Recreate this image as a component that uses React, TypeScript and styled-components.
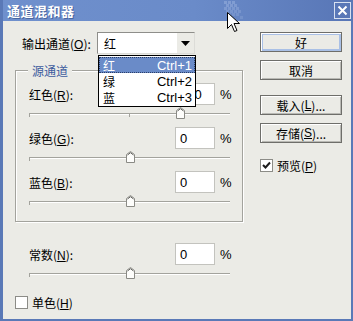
import React from "react";
import styled, { createGlobalStyle } from "styled-components";

const GlobalStyle = createGlobalStyle`
  html, body {
    margin: 0;
    padding: 0;
    background: #ebebe6;
  }
  body {
    font-family: "Liberation Sans", "Noto Sans CJK SC", sans-serif;
    font-size: 12px;
    color: #000;
  }
`;

const Window = styled.div`
  position: relative;
  width: 353px;
  height: 321px;
  box-sizing: border-box;
  background: #ebebe6;
  border-left: 3px solid #5a79b7;
  border-right: 2px solid #5a79b7;
  border-bottom: 2px solid #5a79b7;
  overflow: hidden;
`;

const TitleBar = styled.div`
  position: relative;
  height: 21px;
  margin-left: -3px;
  margin-right: -2px;
  display: flex;
  align-items: center;
  justify-content: space-between;
  padding: 0 2px 0 7px;
  background: linear-gradient(to right, #6f90cd 0%, #6a8bc9 55%, #5876b6 100%);
`;

const Title = styled.span`
  color: #fff;
  font-family: "Noto Sans CJK SC", sans-serif;
  font-weight: 700;
  font-size: 13px;
  letter-spacing: 0.5px;
  text-shadow: 1px 1px 0 #4a66a0;
`;

const CloseButton = styled.div`
  width: 15px;
  height: 15px;
  border: 1px solid #d8e1f1;
  display: flex;
  align-items: center;
  justify-content: center;
`;

const Body = styled.div`
  display: flex;
  height: 298px;
`;

const LeftCol = styled.div`
  width: 229px;
  padding-left: 12px;
  display: flex;
  flex-direction: column;
`;

const RightCol = styled.div`
  margin-left: 16px;
  padding-top: 11px;
  display: flex;
  flex-direction: column;
`;

const OutputRow = styled.div`
  position: relative;
  margin-top: 11px;
  padding-left: 7px;
  display: flex;
  align-items: center;
  height: 22px;
`;

const Label = styled.span<{ $width?: number }>`
  font-family: "Noto Sans CJK SC", sans-serif;
  font-size: 12px;
  width: ${(p) => (p.$width ? `${p.$width}px` : "auto")};
  white-space: nowrap;
  u {
    font-family: "Liberation Sans", sans-serif;
  }
`;

const Combo = styled.div`
  position: relative;
  width: 98px;
  height: 22px;
  box-sizing: border-box;
  background: #fff;
  border: 1px solid #8e8e8a;
  border-right-color: #dcdcd8;
  border-bottom-color: #dcdcd8;
  display: flex;
  align-items: center;
  justify-content: space-between;
  padding-left: 6px;
`;

const ComboArrow = styled.div`
  width: 17px;
  height: 20px;
  background: #ebebe6;
  display: flex;
  align-items: center;
  justify-content: center;
`;

const DropList = styled.div`
  position: absolute;
  left: 0;
  top: 22px;
  width: 98px;
  box-sizing: border-box;
  background: #fff;
  border: 1px solid #000;
  padding: 1px 0;
  z-index: 5;
`;

const DropItem = styled.div<{ $active?: boolean }>`
  height: 16px;
  display: flex;
  align-items: center;
  justify-content: space-between;
  padding: 0 3px 0 4px;
  background: ${(p) => (p.$active ? "#6a8bc8" : "transparent")};
  color: ${(p) => (p.$active ? "#fff" : "#000")};
  outline: ${(p) => (p.$active ? "1px dotted #2a3f6a" : "none")};
  outline-offset: -1px;
  span:first-child {
    font-family: "Noto Sans CJK SC", sans-serif;
  }
  span:last-child {
    font-family: "Liberation Sans", sans-serif;
    font-size: 13px;
  }
`;

const Group = styled.div`
  position: relative;
  margin-top: 16px;
  width: 228px;
  height: 152px;
  box-sizing: border-box;
  border: 1px solid #a3a39d;
  box-shadow: inset 1px 1px 0 #fff, 1px 1px 0 #fff;
  padding: 12px 0 0 13px;
`;

const Legend = styled.span`
  position: absolute;
  top: -8px;
  left: 12px;
  padding: 0 4px;
  background: #ebebe6;
  color: #3d5c9e;
  font-family: "Noto Sans CJK SC", sans-serif;
  font-size: 12px;
  line-height: 16px;
`;

const ParamRow = styled.div<{ $indent?: number }>`
  display: flex;
  align-items: center;
  height: 22px;
  padding-left: ${(p) => p.$indent ?? 0}px;
`;

const NumBox = styled.div`
  width: 40px;
  height: 22px;
  box-sizing: border-box;
  background: #fff;
  border: 1px solid #c3c3be;
  display: flex;
  align-items: center;
  padding-left: 4px;
  font-family: "Liberation Sans", sans-serif;
  font-size: 13px;
`;

const Percent = styled.span`
  margin-left: 5px;
  font-family: "Liberation Sans", sans-serif;
  font-size: 13px;
`;

const SliderWrap = styled.div<{ $indent?: number }>`
  position: relative;
  height: 22px;
  width: 201px;
  margin-left: ${(p) => p.$indent ?? 0}px;
`;

const Track = styled.div`
  position: absolute;
  left: 0;
  right: 0;
  top: 8px;
  height: 1px;
  background: #a3a39d;
  border-bottom: 1px solid #fff;
`;

const Tick = styled.div<{ $at: number }>`
  position: absolute;
  top: 9px;
  left: ${(p) => p.$at}px;
  width: 1px;
  height: 3px;
  background: #a3a39d;
`;

const Thumb = styled.svg`
  position: absolute;
  top: 2px;
`;

const GroupGap = styled.div`
  height: 21px;
`;

const CheckRow = styled.div<{ $top?: number }>`
  display: flex;
  align-items: center;
  gap: 4px;
  margin-top: ${(p) => p.$top ?? 0}px;
`;

const CheckBox = styled.div`
  width: 13px;
  height: 13px;
  box-sizing: border-box;
  background: #fff;
  border: 1px solid #8c8c87;
  display: flex;
  align-items: center;
  justify-content: center;
`;

const Button = styled.div<{ $default?: boolean; $gap?: number }>`
  width: 82px;
  height: 20px;
  box-sizing: border-box;
  margin-top: ${(p) => p.$gap ?? 0}px;
  border: 1px solid #6e6e6a;
  background: #ebebe6;
  box-shadow: ${(p) =>
    p.$default
      ? "inset 1px 1px 0 #fff, inset 0 0 0 2px #a9c0e6"
      : "inset 1px 1px 0 #fff, inset -1px -1px 0 #b9b9b4"};
  display: flex;
  align-items: center;
  justify-content: center;
  font-family: "Noto Sans CJK SC", sans-serif;
  font-size: 12px;
  u {
    font-family: "Liberation Sans", sans-serif;
  }
`;

const Cursor = styled.svg`
  position: absolute;
  left: 224px;
  top: 12px;
  z-index: 10;
`;

const Checker = styled.svg`
  position: absolute;
  left: 222px;
  top: 0;
`;

const SliderThumb = ({ pct }: { pct: number }) => (
  <Thumb width="9" height="12" viewBox="0 0 9 12" style={{ left: `${Math.round(pct * 201) - 4}px` }}>
    <path d="M0.5 3.5 L4.5 0.5 L8.5 3.5 L8.5 11.5 L0.5 11.5 Z" fill="#fdfdfb" stroke="#8a8a85" />
    <path d="M1.5 4 L4.5 1.7 L7.5 4" fill="none" stroke="#5f5f5b" />
  </Thumb>
);

const Slider = ({ pct, indent }: { pct: number; indent?: number }) => (
  <SliderWrap $indent={indent}>
    <Track />
    <Tick $at={0} />
    <Tick $at={100} />
    <SliderThumb pct={pct} />
  </SliderWrap>
);

const params = [
  { name: "红色", key: "R", value: "100", pct: 0.75 },
  { name: "绿色", key: "G", value: "0", pct: 0.5 },
  { name: "蓝色", key: "B", value: "0", pct: 0.5 },
];

export default function App() {
  return (
    <>
      <GlobalStyle />
      <Window>
        <TitleBar>
          <Title>通道混和器</Title>
          <Checker width="30" height="21" viewBox="0 0 30 21">
            {[
              [2, 1], [6, 1], [10, 1], [4, 4], [8, 4], [12, 4], [2, 7], [6, 7], [10, 7], [14, 7],
              [4, 10], [8, 10], [12, 10], [16, 10], [6, 13], [10, 13], [14, 13], [18, 16],
            ].map(([x, y], i) => (
              <rect key={i} x={x} y={y} width="3" height="3" fill="#8fa8d9" opacity={0.7 - i * 0.02} />
            ))}
          </Checker>
          <CloseButton>
            <svg width="11" height="11" viewBox="0 0 11 11">
              <path d="M1.5 1.5 L9.5 9.5 M9.5 1.5 L1.5 9.5" stroke="#fff" strokeWidth="2" />
            </svg>
          </CloseButton>
        </TitleBar>
        <Body>
          <LeftCol>
            <OutputRow>
              <Label $width={75}>
                输出通道(<u>O</u>):
              </Label>
              <Combo>
                <Label>红</Label>
                <ComboArrow>
                  <svg width="9" height="5" viewBox="0 0 9 5">
                    <path d="M0 0 L9 0 L4.5 5 Z" fill="#000" />
                  </svg>
                </ComboArrow>
                <DropList>
                  <DropItem $active>
                    <span>红</span>
                    <span>Ctrl+1</span>
                  </DropItem>
                  <DropItem>
                    <span>绿</span>
                    <span>Ctrl+2</span>
                  </DropItem>
                  <DropItem>
                    <span>蓝</span>
                    <span>Ctrl+3</span>
                  </DropItem>
                </DropList>
              </Combo>
            </OutputRow>
            <Group>
              <Legend>源通道</Legend>
              {params.map((p) => (
                <React.Fragment key={p.key}>
                  <ParamRow>
                    <Label $width={146}>
                      {p.name}(<u>{p.key}</u>):
                    </Label>
                    <NumBox>{p.value}</NumBox>
                    <Percent>%</Percent>
                  </ParamRow>
                  <Slider pct={p.pct} />
                </React.Fragment>
              ))}
            </Group>
            <GroupGap />
            <ParamRow $indent={14}>
              <Label $width={146}>
                常数(<u>N</u>):
              </Label>
              <NumBox>0</NumBox>
              <Percent>%</Percent>
            </ParamRow>
            <Slider pct={0.5} indent={14} />
            <CheckRow $top={7}>
              <CheckBox />
              <Label>
                单色(<u>H</u>)
              </Label>
            </CheckRow>
          </LeftCol>
          <RightCol>
            <Button $default>好</Button>
            <Button $gap={8}>取消</Button>
            <Button $gap={15}>
              载入(<u>L</u>)...
            </Button>
            <Button $gap={8}>
              存储(<u>S</u>)...
            </Button>
            <CheckRow $top={14}>
              <CheckBox>
                <svg width="9" height="9" viewBox="0 0 9 9">
                  <path d="M1 4 L3.5 6.5 L8 1.5" fill="none" stroke="#1c1c1c" strokeWidth="2" />
                </svg>
              </CheckBox>
              <Label>
                预览(<u>P</u>)
              </Label>
            </CheckRow>
          </RightCol>
        </Body>
        <Cursor width="14" height="22" viewBox="0 0 14 22">
          <path
            d="M0.5 0.5 L0.5 16.5 L4.5 12.5 L7.5 19.5 L10 18.5 L7 11.5 L12.5 11.5 Z"
            fill="#fff"
            stroke="#000"
            strokeLinejoin="round"
          />
        </Cursor>
      </Window>
    </>
  );
}
